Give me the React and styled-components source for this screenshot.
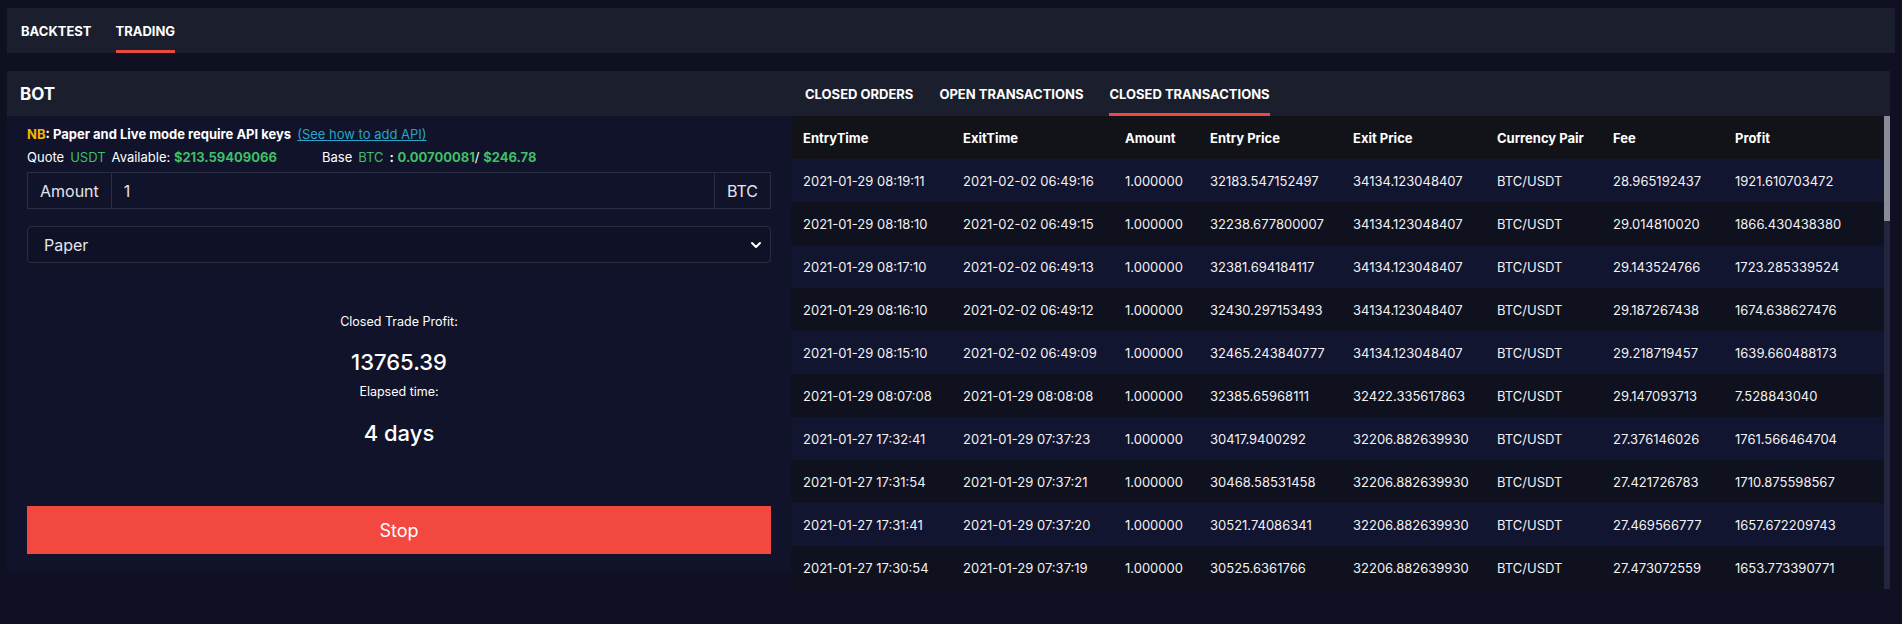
import React from "react";
import styled, { createGlobalStyle } from "styled-components";

const GlobalStyle = createGlobalStyle`
  html, body {
    margin: 0;
    background: #0f1122;
    font-family: Inter, "Noto Sans", sans-serif;
    color: #ffffff;
  }
  * { box-sizing: border-box; }
`

const Page = styled.div`
  padding: 8px 7px 0 7px;
  height: 624px;
  overflow: hidden;
`
const NavBar = styled.div`
  display: flex;
  align-items: stretch;
  height: 45px;
  background: #1b1e2c;
  padding-left: 14px;
  gap: 24px;
`
const Tab = styled.div`
  display: flex;
  align-items: center;
  font-size: 13px;
  font-weight: 700;
  text-transform: uppercase;
  color: #ffffff;
  border-bottom: 3px solid ${(p) => (p.active ? "#ea4a3f" : "transparent")};
  padding-top: 3px;
`
const Main = styled.div`
  display: flex;
  margin-top: 18px;
  align-items: flex-start;
`
const BotPanel = styled.div`
  width: 784px;
  flex-shrink: 0;
  background: #10132a;
`
const PanelHeader = styled.div`
  height: 45px;
  display: flex;
  align-items: center;
  padding-left: 13px;
  background: #1b1e2c;
  font-size: 17px;
  font-weight: 700;
`
const BotBody = styled.div`
  padding: 9px 20px 19px 20px;
  display: flex;
  flex-direction: column;
`
const Note = styled.div`
  font-size: 13px;
  font-weight: 700;
  line-height: 18px;
  color: #ffffff;
`
const Yellow = styled.span`
  color: #f7b500;
`
const Link = styled.a`
  font-weight: 400;
  color: #2aa3c9;
  text-decoration: underline;
  margin-left: 6px;
`
const Balances = styled.div`
  display: flex;
  margin-top: 5px;
  font-size: 13px;
  line-height: 18px;
  gap: 45px;
`
const BalanceGroup = styled.div`
  display: flex;
  gap: 6px;
`
const Green = styled.span`
  color: #3fbf68;
  font-weight: ${(p) => (p.bold ? 700 : 400)};
`
const InputGroup = styled.div`
  display: flex;
  margin-top: 6px;
  height: 37px;
  border: 1px solid #2a2e45;
`
const Addon = styled.div`
  display: flex;
  align-items: center;
  padding: 0 12px;
  font-size: 16px;
  color: #e4e5ea;
  border-${(p) => p.side}: 1px solid #2a2e45;
`
const AmountInput = styled.input`
  flex: 1;
  background: transparent;
  border: none;
  outline: none;
  color: #e4e5ea;
  font-family: inherit;
  font-size: 16px;
  padding: 0 12px;
`
const SelectWrap = styled.div`
  position: relative;
  margin-top: 17px;
`
const ModeSelect = styled.select`
  width: 100%;
  height: 37px;
  appearance: none;
  background: #0f1226;
  border: 1px solid #2a2e45;
  border-radius: 4px;
  color: #e4e5ea;
  font-family: inherit;
  font-size: 16px;
  padding: 0 16px;
  outline: none;
`
const Chevron = styled.svg`
  position: absolute;
  right: 9px;
  top: 13px;
  pointer-events: none;
`
const Stats = styled.div`
  display: flex;
  flex-direction: column;
  align-items: center;
  margin-top: 50px;
`
const StatLabel = styled.div`
  font-size: 12.5px;
  line-height: 18px;
  margin-top: ${(p) => p.gap || 0}px;
`
const StatValue = styled.div`
  font-size: 22px;
  font-weight: 500;
  line-height: 28px;
  margin-top: ${(p) => p.gap || 0}px;
`
const StopButton = styled.button`
  margin-top: 59px;
  height: 48px;
  border: none;
  background: #f3483f;
  color: #ffffff;
  font-family: inherit;
  font-size: 18px;
  cursor: pointer;
`
const OrdersPanel = styled.div`
  width: 1099px;
  flex-shrink: 0;
`
const OrdersTabs = styled.div`
  display: flex;
  height: 45px;
  background: #1b1e2c;
  padding-left: 14px;
  gap: 26px;
`
const TableArea = styled.div`
  display: flex;
  height: 473px;
`
const TableScroll = styled.div`
  width: 1093px;
  overflow-y: auto;
  scrollbar-width: none;
  &::-webkit-scrollbar { display: none; }
`
const Table = styled.table`
  width: 1093px;
  border-collapse: collapse;
  table-layout: fixed;
  font-size: 13px;
`
const ScrollTrack = styled.div`
  width: 6px;
  background: #21253d;
`
const ScrollThumb = styled.div`
  height: 105px;
  background: #8a8c9a;
`
const HeadRow = styled.tr`
  background: #111318;
  height: 43px;
`
const Th = styled.th`
  text-align: left;
  font-weight: 700;
  padding: 0 12px;
`
const Row = styled.tr`
  height: 43px;
  background: ${(p) => (p.odd ? "#121530" : "#0f111e")};
`
const Td = styled.td`
  padding: 0 12px;
  white-space: nowrap;
  color: #f2f2f4;
`

const columns = [
    ["EntryTime", 160], ["ExitTime", 162], ["Amount", 85], ["Entry Price", 143],
    ["Exit Price", 144], ["Currency Pair", 116], ["Fee", 122], ["Profit", 161],
]

const trades = [
    ["2021-01-29 08:19:11", "2021-02-02 06:49:16", "32183.547152497", "34134.123048407", "28.965192437", "1921.610703472"],
    ["2021-01-29 08:18:10", "2021-02-02 06:49:15", "32238.677800007", "34134.123048407", "29.014810020", "1866.430438380"],
    ["2021-01-29 08:17:10", "2021-02-02 06:49:13", "32381.694184117", "34134.123048407", "29.143524766", "1723.285339524"],
    ["2021-01-29 08:16:10", "2021-02-02 06:49:12", "32430.297153493", "34134.123048407", "29.187267438", "1674.638627476"],
    ["2021-01-29 08:15:10", "2021-02-02 06:49:09", "32465.243840777", "34134.123048407", "29.218719457", "1639.660488173"],
    ["2021-01-29 08:07:08", "2021-01-29 08:08:08", "32385.65968111", "32422.335617863", "29.147093713", "7.528843040"],
    ["2021-01-27 17:32:41", "2021-01-29 07:37:23", "30417.9400292", "32206.882639930", "27.376146026", "1761.566464704"],
    ["2021-01-27 17:31:54", "2021-01-29 07:37:21", "30468.58531458", "32206.882639930", "27.421726783", "1710.875598567"],
    ["2021-01-27 17:31:41", "2021-01-29 07:37:20", "30521.74086341", "32206.882639930", "27.469566777", "1657.672209743"],
    ["2021-01-27 17:30:54", "2021-01-29 07:37:19", "30525.6361766", "32206.882639930", "27.473072559", "1653.773390771"],
]

// older trades further down the list (scrolled out of view)
for (let i = 0; i < 38; i++) {
    const min = String(29 - (i % 28)).padStart(2, "0")
    const entry = (30490.1 + i * 13.37).toFixed(9)
    const fee = (27.44 + i * 0.012).toFixed(9)
    const profit = (32206.88263993 - entry).toFixed(9)
    trades.push([`2021-01-27 17:${min}:1${i % 10}`, "2021-01-29 07:37:1" + (i % 10), entry, "32206.882639930", fee, profit])
}

export default function App() {
    return (
        <Page>
            <GlobalStyle />
            <NavBar>
                <Tab>Backtest</Tab>
                <Tab active>Trading</Tab>
            </NavBar>

            <Main>
                <BotPanel>
                    <PanelHeader>BOT</PanelHeader>
                    <BotBody>
                        <Note>
                            <Yellow>NB</Yellow>: Paper and Live mode require API keys
                            <Link href="#">(See how to add API)</Link>
                        </Note>
                        <Balances>
                            <BalanceGroup>
                                <span>Quote</span>
                                <Green>USDT</Green>
                                <span>Available: <Green bold>$213.59409066</Green></span>
                            </BalanceGroup>
                            <BalanceGroup>
                                <span>Base</span>
                                <Green>BTC</Green>
                                <span><b>:</b> <Green bold>0.00700081</Green>/ <Green bold>$246.78</Green></span>
                            </BalanceGroup>
                        </Balances>
                        <InputGroup>
                            <Addon side="right">Amount</Addon>
                            <AmountInput defaultValue="1" />
                            <Addon side="left">BTC</Addon>
                        </InputGroup>
                        <SelectWrap>
                            <ModeSelect defaultValue="paper">
                                <option value="paper">Paper</option>
                                <option value="live">Live</option>
                            </ModeSelect>
                            <Chevron width="12" height="12" viewBox="0 0 12 12">
                                <path d="M2 4l4 4 4-4" fill="none" stroke="#ffffff" strokeWidth="2" strokeLinecap="round" strokeLinejoin="round" />
                            </Chevron>
                        </SelectWrap>
                        <Stats>
                            <StatLabel>Closed Trade Profit:</StatLabel>
                            <StatValue gap={17}>13765.39</StatValue>
                            <StatLabel gap={7}>Elapsed time:</StatLabel>
                            <StatValue gap={18}>4 days</StatValue>
                        </Stats>
                        <StopButton>Stop</StopButton>
                    </BotBody>
                </BotPanel>

                <OrdersPanel>
                    <OrdersTabs>
                        <Tab>Closed Orders</Tab>
                        <Tab>Open Transactions</Tab>
                        <Tab active>Closed Transactions</Tab>
                    </OrdersTabs>
                    <TableArea>
                        <TableScroll>
                            <Table>
                                <colgroup>
                                    {columns.map(([name, w]) => <col key={name} style={{ width: w }} />)}
                                </colgroup>
                                <thead>
                                    <HeadRow>
                                        {columns.map(([name]) => <Th key={name}>{name}</Th>)}
                                    </HeadRow>
                                </thead>
                                <tbody>
                                    {trades.map((t, i) => (
                                        <Row key={i} odd={i % 2 === 0}>
                                            <Td>{t[0]}</Td>
                                            <Td>{t[1]}</Td>
                                            <Td>1.000000</Td>
                                            <Td>{t[2]}</Td>
                                            <Td>{t[3]}</Td>
                                            <Td>BTC/USDT</Td>
                                            <Td>{t[4]}</Td>
                                            <Td>{t[5]}</Td>
                                        </Row>
                                    ))}
                                </tbody>
                            </Table>
                        </TableScroll>
                        <ScrollTrack>
                            <ScrollThumb />
                        </ScrollTrack>
                    </TableArea>
                </OrdersPanel>
            </Main>
        </Page>
    )
}
